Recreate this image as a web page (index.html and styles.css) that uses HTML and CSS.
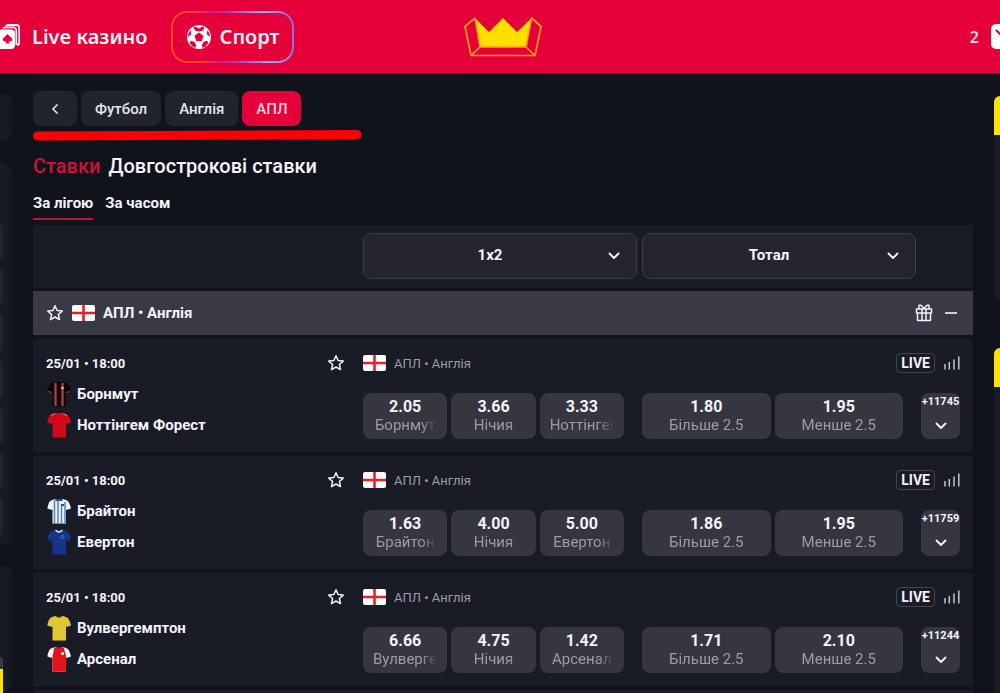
FILE: index.html
```html
<!DOCTYPE html>
<html lang="uk">
<head>
<meta charset="utf-8">
<meta name="viewport" content="width=device-width, initial-scale=1">
<title>АПЛ • Англія</title>
<link rel="stylesheet" href="styles.css">
</head>
<body>
<svg class="sprite" aria-hidden="true">
  <symbol id="star" viewBox="0 0 18 18"><path d="M9 1.800l2.100 4.700 5.100.6-3.800 3.400 1.100 5.100L9 13l-4.500 2.600 1.100-5.100-3.800-3.400 5.100-.6z" fill="none" stroke="currentColor" stroke-width="1.500" stroke-linejoin="round"/></symbol>
  <symbol id="flag" viewBox="0 0 23 16"><rect width="23" height="16" rx="2" fill="#fff"/><path d="M11.500 0v16M0 8h23" stroke="#e8202a" stroke-width="2.600"/></symbol>
  <symbol id="chevron" viewBox="0 0 12 8"><path d="M1.500 1.500L6 6l4.500-4.500" fill="none" stroke="currentColor" stroke-width="1.900" stroke-linecap="round" stroke-linejoin="round"/></symbol>
  <symbol id="bars" viewBox="0 0 16 14"><path d="M1 8v5.500M5.300 6v7.500M10 3.500v10M14.800 .5v13" stroke="currentColor" stroke-width="1.500"/></symbol>
  <symbol id="shirt" viewBox="0 0 24 26"><path d="M8 1h8l4 1.500c2 1 3 4 4 8l-4.500 1.500L19 11v14.500H5.500V11L5 12 .3 10.500C1 6.500 2 3.500 4 2.500z"/></symbol>
</svg>

<header class="topbar">
  <nav class="topnav">
    <a class="topnav-link" href="#casino">
      <svg class="cards" width="20" height="26" viewBox="3 0 20 26" aria-hidden="true">
        <path d="M9 2.500Q9.300 1 11 1h8.500Q22.300 1 22.300 4v14q0 3-2.300 3" fill="none" stroke="#fff" stroke-width="1.800"/>
        <path d="M6 4.500Q6.500 3.400 8.500 3.400h7.500q3.300 0 3.300 3.300V21" fill="none" stroke="#fff" stroke-width="1.600"/>
        <rect x="1" y="5.500" width="17" height="19.500" rx="4" fill="#fff"/>
        <path d="M10.500 10l4.200 4.300c1.500 2-.9 4.200-3.100 2.700l.9 2.500h-4l.9-2.500c-2.200 1.500-4.600-.7-3.100-2.700z" fill="#e60039"/>
      </svg>
      Live казино
    </a>
    <a class="topnav-link topnav-link--active" href="#sport">
      <svg width="26" height="26" viewBox="0 0 26 26" aria-hidden="true">
        <circle cx="13" cy="13" r="12" fill="#fff"/>
        <g fill="#e60039"><path d="M13 8.500l4.500 3.300-1.700 5.200h-5.600l-1.700-5.200z"/><path d="M9.300 2.400L13 4.600l3.700-2.200 1.800.8L17 6.500l-4 1-4-1-1.500-3.300zM2 12.800l3.200-2.600-.5-4-1.400 1.700-1.300 3.600zM24 12.800l-3.200-2.600.5-4 1.400 1.700 1.300 3.600zM3.600 18.500l1.300-1.700 3.400 1 1.900 3.500-.9 2.600-3.300-1.800zM22.400 18.500l-1.300-1.700-3.400 1-1.900 3.500.9 2.600 3.300-1.800z"/></g>
      </svg>
      Спорт
    </a>
  </nav>
  <a class="logo" href="#home" aria-label="Головна">
    <svg width="78" height="42" viewBox="0 0 78 42" aria-hidden="true">
      <path d="M11 2l14 14L39 2l14 14L67.500 2 62 31H16z" fill="#ffdf00"/>
      <path d="M11 2L1 10.500 7 39.500h64l6-29L67.500 2 62 31l9 8.500M7 39.500L16 31h46M11 2l5 29" fill="none" stroke="#ff9d1c" stroke-width="1.700" stroke-linejoin="round"/>
    </svg>
  </a>
  <a class="inbox" href="#inbox" aria-label="Повідомлення: 2">
    2
    <svg width="9" height="26" viewBox="0 0 9 26" aria-hidden="true"><rect x="0" y="0" width="28" height="25" rx="5" fill="#fff"/><path d="M5 6l8 8" stroke="#e60039" stroke-width="2"/></svg>
  </a>
</header>

<div class="layout">
  <aside class="rail">
    <div class="rail-card rail-card--small"></div>
    <div class="rail-card rail-card--list"><i></i><i></i><i></i><i></i><i></i><i></i><i></i></div>
    <div class="rail-card rail-card--promo"><b></b></div>
  </aside>

  <main class="content">
    <nav class="crumbs">
      <button class="chip chip--back" type="button" aria-label="Назад"><svg width="8" height="12" viewBox="0 0 8 12" aria-hidden="true"><path d="M6.500 1.500L2 6l4.500 4.500" fill="none" stroke="currentColor" stroke-width="1.600"/></svg></button>
      <a class="chip" href="#football">Футбол</a>
      <a class="chip" href="#england">Англія</a>
      <a class="chip chip--active" href="#apl">АПЛ</a>
    </nav>
    <svg class="marker" width="330" height="12" viewBox="0 0 330 12" aria-hidden="true"><path d="M4.500 7L324 5.500" stroke="#fb0007" stroke-width="9" stroke-linecap="round"/></svg>

    <nav class="sections"><a class="section section--active" href="#bets">Ставки</a><a class="section" href="#outrights">Довгострокові ставки</a></nav>
    <nav class="tabs"><a class="tab tab--active" href="#league">За лігою</a><a class="tab" href="#time">За часом</a></nav>

    <div class="filters row-grid">
      <div class="picker picker--first"><select aria-label="Ринок 1"><option>1x2</option></select><svg class="picker-arrow" width="12" height="8"><use href="#chevron"/></svg></div>
      <div class="picker"><select aria-label="Ринок 2"><option>Тотал</option></select><svg class="picker-arrow" width="12" height="8"><use href="#chevron"/></svg></div>
    </div>

    <div class="league">
      <button class="icon-button" type="button" aria-label="В обране"><svg width="18" height="18"><use href="#star"/></svg></button>
      <svg width="23" height="16" aria-hidden="true"><use href="#flag"/></svg>
      <h2 class="league-name">АПЛ • Англія</h2>
      <svg class="gift" width="18" height="18" viewBox="0 0 18 18" aria-hidden="true"><path d="M1.500 5h15v4h-15zM2.500 9v7.500h13V9M7 5v11.500M11 5v11.500M9 5C7 .5 3.500 0 3.800 3c.1 1 .8 2 1.700 2M9 5c2-4.500 5.500-5 5.200-2-.1 1-.8 2-1.700 2" fill="none" stroke="currentColor" stroke-width="1.500" stroke-linejoin="round"/></svg>
      <button class="icon-button" type="button" aria-label="Згорнути"><svg width="12" height="12" viewBox="0 0 12 12"><path d="M0 6h12" stroke="currentColor" stroke-width="1.600"/></svg></button>
    </div>

    <article class="match row-grid">
      <div class="match-when"><time>25/01 • 18:00</time><button class="icon-button" type="button" aria-label="В обране"><svg width="18" height="18"><use href="#star"/></svg></button></div>
      <div class="match-league"><svg width="23" height="16" aria-hidden="true"><use href="#flag"/></svg>АПЛ • Англія</div>
      <div class="match-meta"><span class="live">LIVE</span><svg width="16" height="14" aria-hidden="true"><use href="#bars"/></svg></div>
      <div class="teams">
        <div class="team"><svg width="24" height="26" viewBox="0 0 24 26" aria-hidden="true"><use href="#shirt" fill="#090608"/><path d="M8.500 2v23M15.500 2v23" stroke="#b33a44" stroke-width="2.400"/><path d="M1 10.500l4 1M23 10.500l-4 1" stroke="#b33a44"/><circle cx="15.500" cy="7" r="1.200" fill="#f0c8c8"/></svg>Борнмут</div>
        <div class="team"><svg width="24" height="26" viewBox="0 0 24 26" aria-hidden="true"><use href="#shirt" fill="#d5081b"/><path d="M4 3.500l4-1.800M20 3.500l-4-1.800" stroke="#e78088"/></svg>Ноттінгем Форест</div>
      </div>
      <div class="odds"><button class="odd" type="button"><b>2.05</b><span>Борнмут</span></button><button class="odd" type="button"><b>3.66</b><span>Нічия</span></button><button class="odd" type="button"><b>3.33</b><span>Ноттінгем</span></button></div>
      <div class="odds"><button class="odd" type="button"><b>1.80</b><span>Більше 2.5</span></button><button class="odd" type="button"><b>1.95</b><span>Менше 2.5</span></button></div>
      <button class="more" type="button">+11745<svg width="12" height="8" aria-hidden="true"><use href="#chevron"/></svg></button>
    </article>

    <article class="match row-grid">
      <div class="match-when"><time>25/01 • 18:00</time><button class="icon-button" type="button" aria-label="В обране"><svg width="18" height="18"><use href="#star"/></svg></button></div>
      <div class="match-league"><svg width="23" height="16" aria-hidden="true"><use href="#flag"/></svg>АПЛ • Англія</div>
      <div class="match-meta"><span class="live">LIVE</span><svg width="16" height="14" aria-hidden="true"><use href="#bars"/></svg></div>
      <div class="teams">
        <div class="team"><svg width="24" height="26" viewBox="0 0 24 26" aria-hidden="true"><use href="#shirt" fill="#eef3fa"/><path d="M7.500 2v23M11 2v23M14.500 7v18M18 4v21" stroke="#4f83bd" stroke-width="1.500"/><path d="M8 1h8l-1 2H9zM14 6h3v2h-3z" fill="#24509c"/></svg>Брайтон</div>
        <div class="team"><svg width="24" height="26" viewBox="0 0 24 26" aria-hidden="true"><use href="#shirt" fill="#17348b"/><path d="M8.500 1q3.500 4 7 0" fill="none" stroke="#d6dcec" stroke-width="1.400"/><circle cx="15.500" cy="8" r="1.600" fill="none" stroke="#5d78bd"/></svg>Евертон</div>
      </div>
      <div class="odds"><button class="odd" type="button"><b>1.63</b><span>Брайтон</span></button><button class="odd" type="button"><b>4.00</b><span>Нічия</span></button><button class="odd" type="button"><b>5.00</b><span>Евертон</span></button></div>
      <div class="odds"><button class="odd" type="button"><b>1.86</b><span>Більше 2.5</span></button><button class="odd" type="button"><b>1.95</b><span>Менше 2.5</span></button></div>
      <button class="more" type="button">+11759<svg width="12" height="8" aria-hidden="true"><use href="#chevron"/></svg></button>
    </article>

    <article class="match row-grid">
      <div class="match-when"><time>25/01 • 18:00</time><button class="icon-button" type="button" aria-label="В обране"><svg width="18" height="18"><use href="#star"/></svg></button></div>
      <div class="match-league"><svg width="23" height="16" aria-hidden="true"><use href="#flag"/></svg>АПЛ • Англія</div>
      <div class="match-meta"><span class="live">LIVE</span><svg width="16" height="14" aria-hidden="true"><use href="#bars"/></svg></div>
      <div class="teams">
        <div class="team"><svg width="24" height="26" viewBox="0 0 24 26" aria-hidden="true"><use href="#shirt" fill="#dfc735"/><path d="M8.500 1h7q-3.500 3.500-7 0z" fill="#3a2d12"/></svg>Вулвергемптон</div>
        <div class="team"><svg width="24" height="26" viewBox="0 0 24 26" aria-hidden="true"><use href="#shirt" fill="#f6f3f5"/><path d="M7 1.500h10q.5 4 2 8v16H5.500v-16q1.500-4 1.500-8z" fill="#e5121c"/><path d="M8.500 1h7q-3.500 3.500-7 0z" fill="#9d0d18"/><circle cx="15.500" cy="7.500" r="1.500" fill="#fff"/></svg>Арсенал</div>
      </div>
      <div class="odds"><button class="odd" type="button"><b>6.66</b><span>Вулвергемптон</span></button><button class="odd" type="button"><b>4.75</b><span>Нічия</span></button><button class="odd" type="button"><b>1.42</b><span>Арсенал</span></button></div>
      <div class="odds"><button class="odd" type="button"><b>1.71</b><span>Більше 2.5</span></button><button class="odd" type="button"><b>2.10</b><span>Менше 2.5</span></button></div>
      <button class="more" type="button">+11244<svg width="12" height="8" aria-hidden="true"><use href="#chevron"/></svg></button>
    </article>
    <div class="match-next"></div>
  </main>

  <aside class="slip">
    <div class="slip-card"></div>
    <div class="slip-card"></div>
  </aside>
</div>
</body>
</html>
```
FILE: styles.css
```css
* { box-sizing: border-box; }

:root {
  --brand: #e60039;
  --bg: #10131c;
  --panel: #191b26;
  --raised: #353640;
  --muted: #9c9da4;
  --yellow: #ffe000;
}

body {
  display: flex;
  flex-direction: column;
  height: 100vh;
  margin: 0;
  overflow: hidden;
  background: var(--bg);
  color: #f4f4f6;
  font-family: Roboto, "Liberation Sans", sans-serif;
  font-size: 15px;
}

a { color: inherit; text-decoration: none; }
button, select { color: inherit; font: inherit; border: 0; margin: 0; padding: 0; cursor: pointer; }
svg { display: block; flex: none; }
.sprite { position: absolute; width: 0; height: 0; }

.topbar {
  display: grid;
  grid-template-columns: 1fr auto 1fr;
  align-items: center;
  flex: none;
  height: 73px;
  background: var(--brand);
  font-family: "Noto Sans", sans-serif;
  font-weight: 600;
}
.topnav { display: flex; align-items: center; gap: 23px; }
.topnav-link { display: flex; align-items: center; gap: 12px; font-size: 20px; white-space: nowrap; }
.topnav-link--active {
  gap: 8px;
  height: 52px;
  padding: 0 13px;
  border: 2px solid transparent;
  border-radius: 16px;
  background:
    linear-gradient(var(--brand), var(--brand)) padding-box,
    linear-gradient(80deg, #ff4a20 0%, #ff4a20 20%, #d8188c 38%, #a23bd0 50%, #8fb8ff 76%, #8b62dc 100%) border-box;
}
.logo { padding-left: 6px; }
.inbox { display: flex; align-items: center; justify-content: flex-end; gap: 12px; color: #ffd9e2; font-size: 16px; }

.layout { display: flex; flex: 1; min-height: 0; overflow: hidden; }

.rail { display: flex; flex-direction: column; flex: none; gap: 20px; width: 12px; padding-top: 20px; }
.rail-card { background: #161a24; border-radius: 0 12px 12px 0; }
.rail-card--small { height: 49px; }
.rail-card--list { display: flex; flex-direction: column; gap: 10px; padding: 61px 9px 10px 0; }
.rail-card--list i { height: 36px; background: #20242d; border-radius: 0 4px 4px 0; }
.rail-card--promo { display: flex; flex-direction: column; justify-content: flex-end; flex: 1; }
.rail-card--promo b { width: 3px; height: 36px; border-top: 12px solid #383a42; border-radius: 0 4px 0 0; background: var(--yellow); }

.content { flex: 1; min-width: 0; padding: 18px 21px 0; }

.crumbs { display: flex; gap: 4px; }
.chip {
  display: flex;
  align-items: center;
  justify-content: center;
  height: 35px;
  padding: 0 14px;
  border-radius: 8px;
  background: #20242c;
  color: #e6e6ea;
  font-weight: 500;
}
.chip--back { width: 44px; }
.chip--active { background: var(--brand); color: #ffd9e2; }
.marker { margin-top: 3px; }

.sections { display: flex; gap: 8px; margin-top: 13px; font-size: 20px; font-weight: 500; line-height: 24px; }
.section--active { color: #cf1038; }
.tabs { display: flex; gap: 12px; margin-top: 13px; font-weight: 700; line-height: 24px; }
.tab { height: 29px; border-bottom: 2px solid transparent; }
.tab--active { border-color: #c01238; }

.row-grid {
  display: grid;
  grid-template-columns: minmax(0, 317fr) minmax(0, 279fr) minmax(0, 279fr) 39px;
  padding: 0 13px;
  background: var(--panel);
}

.filters { margin-top: 5px; padding-top: 8px; padding-bottom: 9px; }
.picker { position: relative; margin-right: 5px; }
.picker--first { grid-column: 2; }
.picker select {
  appearance: none;
  display: block;
  width: 100%;
  height: 46px;
  padding: 0 42px 2px 22px;
  border: 1px solid #3c3e47;
  border-radius: 8px;
  background: #23242e;
  font-weight: 700;
  text-align: center;
  text-align-last: center;
}
.picker-arrow { position: absolute; top: 19px; right: 17px; pointer-events: none; }

.league { display: flex; align-items: center; gap: 8px; height: 44px; margin-top: 3px; padding: 0 16px 0 13px; background: #393a45; }
.league-name { flex: 1; margin: 0; font-size: 15px; font-weight: 700; }
.icon-button { display: block; background: none; }
.gift { margin-right: 4px; }

.match { grid-template-rows: 24px 62px; row-gap: 3px; margin-top: 4px; padding-top: 12px; padding-bottom: 12px; }
.match-when { display: flex; align-items: center; justify-content: space-between; padding-right: 18px; font-size: 13px; font-weight: 700; }
.match-league { display: flex; align-items: center; gap: 8px; color: var(--muted); font-size: 13px; }
.match-meta { display: flex; grid-column: 3 / 5; align-items: center; justify-content: flex-end; gap: 9px; color: #c4c5ca; }
.live { padding: 0 4px; border: 1px solid #43454e; border-radius: 4px; color: #f4f4f6; font-size: 14px; font-weight: 700; line-height: 18px; }
.match-next { height: 20px; margin-top: 4px; background: var(--panel); }

.team { display: flex; align-items: center; gap: 6px; height: 31px; padding-left: 1px; font-weight: 700; white-space: nowrap; }

.odds { display: flex; gap: 4px; height: 46px; margin: 15px 18px 0 0; }
.odd {
  display: flex;
  flex: 1;
  flex-direction: column;
  justify-content: center;
  min-width: 0;
  padding: 0 10px;
  border-radius: 8px;
  background: var(--raised);
  line-height: 18px;
}
.odd b { align-self: center; font-size: 16px; font-weight: 700; }
.odd span {
  width: 100%;
  overflow: hidden;
  color: var(--muted);
  text-align: center;
  white-space: nowrap;
  mask-image: linear-gradient(90deg, #000 calc(100% - 16px), transparent);
}
.more {
  display: flex;
  flex-direction: column;
  align-items: center;
  justify-content: space-between;
  height: 46px;
  margin-top: 15px;
  padding: 2px 0 9px;
  border-radius: 8px;
  background: var(--raised);
  font-size: 11px;
  font-weight: 700;
  line-height: 14px;
}

.slip { display: flex; flex-direction: column; flex: none; gap: 48px; width: 6px; padding-top: 23px; }
.slip-card { flex: none; height: 204px; border-top: 39px solid var(--yellow); border-radius: 8px 0 0 8px; background: #181a24; }
.slip-card:last-child { height: 360px; }
```
